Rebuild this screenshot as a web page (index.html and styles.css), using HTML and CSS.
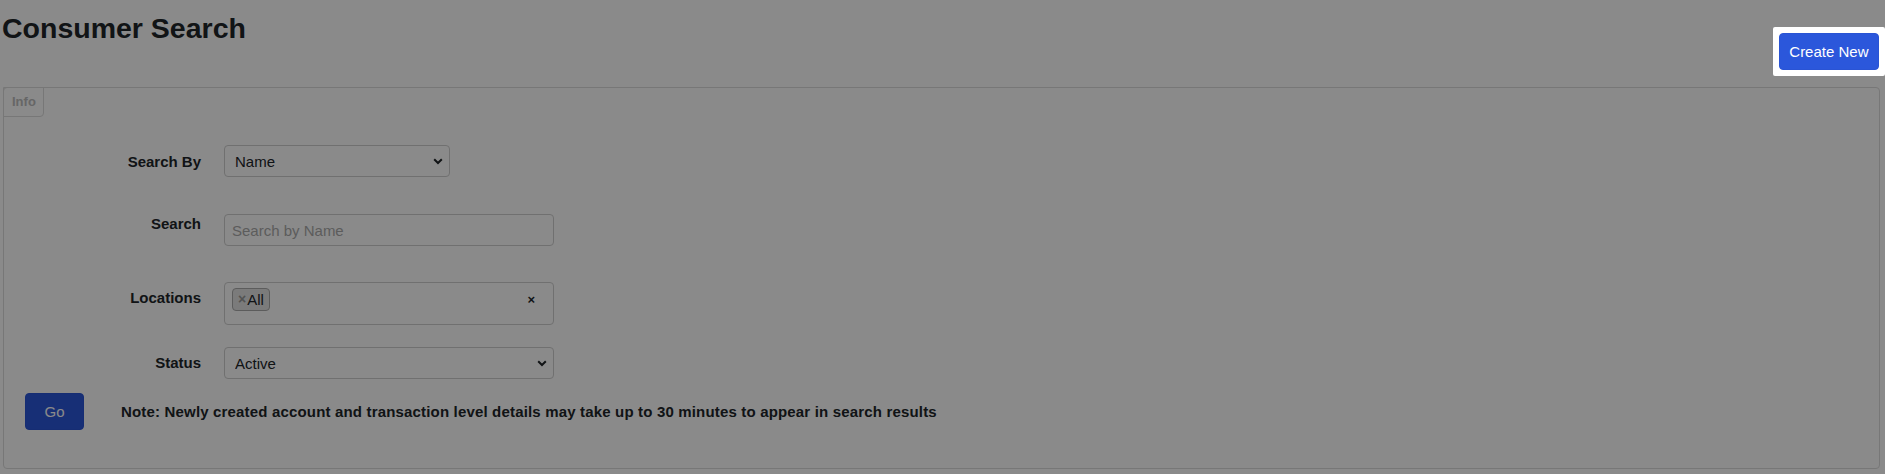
FILE: index.html
```html
<!DOCTYPE html>
<html lang="en">
<head>
<meta charset="utf-8">
<title>Consumer Search</title>
<link rel="stylesheet" href="styles.css">
</head>
<body>
<div class="page">
  <header class="page-header">
    <h1 class="page-title">Consumer Search</h1>
    <div class="tour-highlight">
      <button type="button" class="btn btn-primary">Create New</button>
    </div>
  </header>

  <section class="panel">
    <div class="panel-tab">Info</div>
    <form class="search-form">
      <div class="form-row row-search-by">
        <label class="form-label">Search By</label>
        <div class="select-wrap select-narrow">
          <select class="form-select"><option>Name</option></select>
          <svg class="chevron" width="10" height="7" viewBox="0 0 10 7"><path d="M1.2 1.2 L5 5 L8.8 1.2" fill="none" stroke="#212529" stroke-width="2"/></svg>
        </div>
      </div>

      <div class="form-row row-search">
        <label class="form-label label-tight">Search</label>
        <input class="form-input" type="text" placeholder="Search by Name">
      </div>

      <div class="form-row row-locations">
        <label class="form-label">Locations</label>
        <div class="multi-select">
          <span class="tag"><span class="tag-remove">×</span>All</span>
          <span class="multi-clear">×</span>
        </div>
      </div>

      <div class="form-row row-status">
        <label class="form-label">Status</label>
        <div class="select-wrap select-wide">
          <select class="form-select"><option>Active</option></select>
          <svg class="chevron" width="10" height="7" viewBox="0 0 10 7"><path d="M1.2 1.2 L5 5 L8.8 1.2" fill="none" stroke="#212529" stroke-width="2"/></svg>
        </div>
      </div>

      <div class="action-row">
        <button type="button" class="btn btn-primary btn-go">Go</button>
        <p class="note">Note: Newly created account and transaction level details may take up to 30 minutes to appear in search results</p>
      </div>
    </form>
  </section>
</div>
<div class="tour-overlay"></div>
</body>
</html>
```

FILE: styles.css
```css
* { box-sizing: border-box; }

html, body {
  margin: 0;
  padding: 0;
  background: #ffffff;
  overflow: hidden;
}

body {
  font-family: "Liberation Sans", Arial, sans-serif;
  color: #212529;
  font-size: 15px;
}

.page {
  padding: 0 5px 0 3px;
}

.page-header {
  display: flex;
  justify-content: space-between;
  align-items: flex-start;
  height: 87px;
}

.page-title {
  margin: 11px 0 0 -1px;
  font-size: 28.5px;
  line-height: 34px;
  font-weight: 700;
  color: #212529;
}

.tour-highlight {
  position: relative;
  z-index: 101;
  background: #ffffff;
  padding: 6px;
  margin: 27px -5px 0 0;
  border-radius: 2px;
}

.btn {
  font-family: "Liberation Sans", Arial, sans-serif;
  font-size: 15px;
  line-height: 21px;
  padding: 7px 9.5px;
  border: 1px solid transparent;
  border-radius: 4px;
  cursor: pointer;
}

.btn-primary {
  background: #2b57db;
  border-color: #2a54d4;
  color: #ffffff;
}

.btn-go {
  padding: 7px 18.5px;
}

.panel {
  border: 1px solid #dcdcdc;
  border-radius: 4px;
  height: 382px;
}

.panel-tab {
  display: inline-block;
  margin: -1px 0 0 -1px;
  padding: 4px 8px;
  font-size: 13px;
  line-height: 20px;
  font-weight: 700;
  color: #bdbdbd;
  border: 1px solid #dcdcdc;
  border-radius: 0 0 4px 0;
  width: 41px;
  height: 30px;
}

.search-form {
  padding: 28px 21px 0 21px;
}

.form-row {
  display: flex;
  align-items: flex-start;
  gap: 23px;
}

.row-search-by { margin-bottom: 37px; }
.row-search { margin-bottom: 36px; }
.row-locations { margin-bottom: 22px; }
.row-status { margin-bottom: 14px; }

.form-label {
  width: 176px;
  flex: none;
  text-align: right;
  font-weight: 700;
  font-size: 15px;
  line-height: 22px;
  padding-top: 5px;
  color: #212529;
}

.row-search-by .form-label { padding-top: 6px; }

.form-label.label-tight {
  padding-top: 0;
  margin-top: -1px;
}

.select-wrap {
  position: relative;
  height: 32px;
}

.select-narrow { width: 226px; }
.select-wide { width: 330px; }

.form-select {
  appearance: none;
  -webkit-appearance: none;
  width: 100%;
  height: 32px;
  border: 1px solid #cfcfcf;
  border-radius: 4px;
  background: #ffffff;
  padding: 0 26px 0 10px;
  font-family: "Liberation Sans", Arial, sans-serif;
  font-size: 15px;
  color: #212529;
}

.chevron {
  position: absolute;
  right: 7px;
  top: 13px;
  pointer-events: none;
}

.form-input {
  width: 330px;
  height: 32px;
  border: 1px solid #cfcfcf;
  border-radius: 4px;
  background: #ffffff;
  padding: 0 7px;
  font-family: "Liberation Sans", Arial, sans-serif;
  font-size: 15px;
  color: #212529;
}

.form-input::placeholder {
  color: #ababab;
}

.multi-select {
  width: 330px;
  height: 43px;
  border: 1px solid #cfcfcf;
  border-radius: 4px;
  background: #ffffff;
  padding: 5px 18px 0 7px;
  display: flex;
  align-items: flex-start;
}

.tag {
  display: inline-flex;
  align-items: center;
  height: 23px;
  padding: 0 5px 0 5px;
  border: 1px solid #aaaaaa;
  border-radius: 4px;
  background: #e4e4e4;
  font-size: 15px;
  line-height: 21px;
  color: #212529;
}

.tag-remove {
  color: #999999;
  font-weight: 700;
  font-size: 14px;
  margin-right: 1px;
}

.multi-clear {
  margin-left: auto;
  font-weight: 700;
  font-size: 13px;
  line-height: 23px;
  color: #212529;
}

.action-row {
  display: flex;
  align-items: center;
  gap: 37px;
}

.note {
  margin: 0;
  font-weight: 700;
  font-size: 15px;
  letter-spacing: 0.17px;
  line-height: 22px;
  color: #212529;
}

.tour-overlay {
  position: fixed;
  inset: 0;
  background: rgba(0, 0, 0, 0.46);
  z-index: 100;
  pointer-events: none;
}
```
